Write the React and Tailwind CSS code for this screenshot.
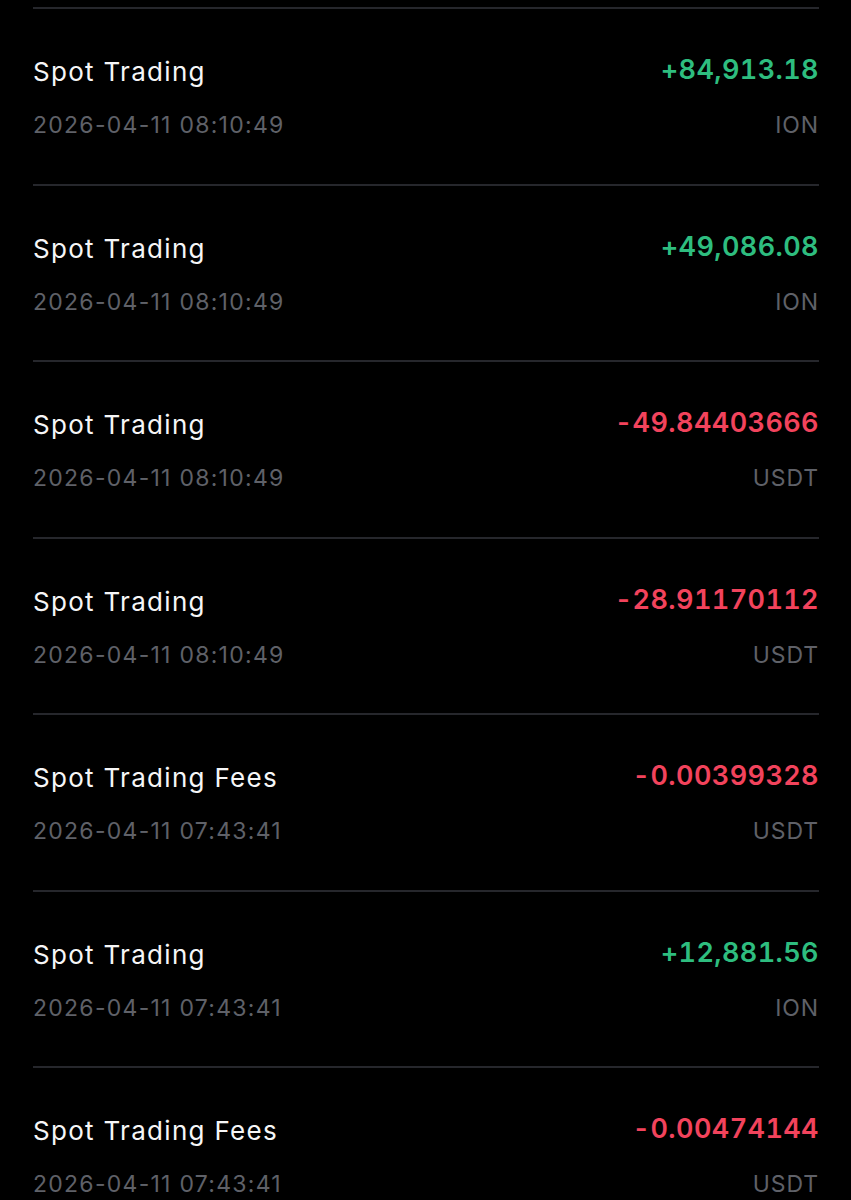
import React from "react";

const rows = [
  { title: "Spot Trading", time: "2026-04-11 08:10:49", amount: "+84,913.18", coin: "ION" },
  { title: "Spot Trading", time: "2026-04-11 08:10:49", amount: "+49,086.08", coin: "ION" },
  { title: "Spot Trading", time: "2026-04-11 08:10:49", amount: "-49.84403666", coin: "USDT" },
  { title: "Spot Trading", time: "2026-04-11 08:10:49", amount: "-28.91170112", coin: "USDT" },
  { title: "Spot Trading Fees", time: "2026-04-11 07:43:41", amount: "-0.00399328", coin: "USDT" },
  { title: "Spot Trading", time: "2026-04-11 07:43:41", amount: "+12,881.56", coin: "ION" },
  { title: "Spot Trading Fees", time: "2026-04-11 07:43:41", amount: "-0.00474144", coin: "USDT" },
];

function Row({ row }) {
  const positive = row.amount.startsWith("+");
  return (
    <div>
      <div className="h-[2px] bg-[#26272c]" />
      <div className="h-[174.5px] flex justify-between pt-[47px]">
        <div className="flex flex-col">
          <span className="text-[26px] leading-[32px] tracking-[0.05em] text-[#f6f6f7]">{row.title}</span>
          <span className="text-[23px] leading-[28px] mt-[23px] tracking-[0.055em] text-[#5f6168]">
            {row.time}
          </span>
        </div>
        <div className="flex flex-col items-end">
          <span
            className={`text-[27px] leading-[32px] font-semibold -mt-[2px] tracking-[0.015em] tabular-nums ${
              positive ? "text-[#2ebd7f]" : "text-[#f2435c]"
            }`}
          >
            {row.amount}
          </span>
          <span className="text-[23px] leading-[28px] mt-[25px] tracking-[0.04em] text-[#5f6168]">{row.coin}</span>
        </div>
      </div>
    </div>
  );
}

export default function App() {
  return (
    <div
      className="min-h-screen bg-black pt-[7px] pl-[33px] pr-[32px] overflow-hidden h-[1200px]"
      style={{ fontFamily: "Inter, 'Noto Sans', sans-serif" }}
    >
      {rows.map((row, i) => (
        <Row key={i} row={row} />
      ))}
    </div>
  );
}
